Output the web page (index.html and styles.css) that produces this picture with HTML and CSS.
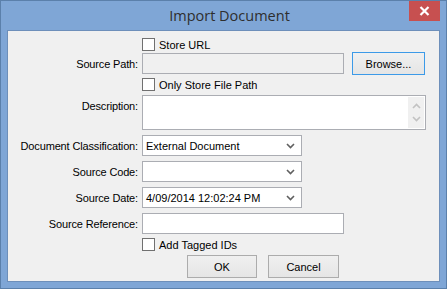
FILE: index.html
```html
<!DOCTYPE html>
<html lang="en">
<head>
    <meta charset="UTF-8">
    <title>Import Document</title>
    <link rel="stylesheet" href="styles.css">
</head>
<body>
    <div class="window">
        <!-- Title bar -->
        <div class="titlebar">
            <span class="title">Import Document</span>
            <div class="close-btn">
                <svg width="11" height="10" viewBox="0 0 11 10">
                    <path d="M1.5 1 L9.5 9 M9.5 1 L1.5 9" stroke="#fff" stroke-width="2.2"/>
                </svg>
            </div>
        </div>

        <!-- Dialog body -->
        <div class="client">
            <div class="row row-check first">
                <span class="label"></span>
                <label class="check"><span class="box"></span>Store URL</label>
            </div>

            <div class="row row-field">
                <span class="label">Source Path:</span>
                <input type="text" class="field path-field" disabled>
                <button class="btn browse">Browse...</button>
            </div>

            <div class="row row-check">
                <span class="label"></span>
                <label class="check"><span class="box"></span>Only Store File Path</label>
            </div>

            <div class="row row-desc">
                <span class="label label-top">Description:</span>
                <div class="field desc-field">
                    <div class="scrollbar">
                        <svg width="9" height="6" viewBox="0 0 9 6"><path d="M1 5 L4.5 1.5 L8 5" fill="none" stroke="#c2c2c2" stroke-width="1.6"/></svg>
                        <svg width="9" height="6" viewBox="0 0 9 6"><path d="M1 1 L4.5 4.5 L8 1" fill="none" stroke="#c2c2c2" stroke-width="1.6"/></svg>
                    </div>
                </div>
            </div>

            <div class="row row-field">
                <span class="label">Document Classification:</span>
                <div class="field select">
                    <span>External Document</span>
                    <svg class="arrow" width="9" height="6" viewBox="0 0 9 6"><path d="M1 1 L4.5 4.5 L8 1" fill="none" stroke="#606060" stroke-width="1.6"/></svg>
                </div>
            </div>

            <div class="row row-field">
                <span class="label">Source Code:</span>
                <div class="field select">
                    <span></span>
                    <svg class="arrow" width="9" height="6" viewBox="0 0 9 6"><path d="M1 1 L4.5 4.5 L8 1" fill="none" stroke="#606060" stroke-width="1.6"/></svg>
                </div>
            </div>

            <div class="row row-field">
                <span class="label">Source Date:</span>
                <div class="field select">
                    <span>4/09/2014 12:02:24 PM</span>
                    <svg class="arrow" width="9" height="6" viewBox="0 0 9 6"><path d="M1 1 L4.5 4.5 L8 1" fill="none" stroke="#606060" stroke-width="1.6"/></svg>
                </div>
            </div>

            <div class="row row-field">
                <span class="label">Source Reference:</span>
                <input type="text" class="field ref-field">
            </div>

            <div class="row row-check">
                <span class="label"></span>
                <label class="check"><span class="box"></span>Add Tagged IDs</label>
            </div>

            <div class="buttons">
                <button class="btn ok">OK</button>
                <button class="btn cancel">Cancel</button>
            </div>
        </div>
    </div>
</body>
</html>
```

FILE: styles.css
```css
* {
    box-sizing: border-box;
}

body {
    margin: 0;
    padding: 0;
    font-family: "Liberation Sans", Arial, sans-serif;
    font-size: 11px;
    color: #000;
}

/* Window frame */
.window {
    width: 447px;
    height: 289px;
    background-color: #7fa6d6;
    border: 1px solid #5b80ab;
    display: flex;
    flex-direction: column;
}

.titlebar {
    height: 29px;
    position: relative;
    display: flex;
    justify-content: center;
    align-items: center;
    padding-left: 12px;
}

.title {
    font-family: "Open Sans", sans-serif;
    font-size: 14.5px;
    color: #2e2e2e;
    margin-top: -1px;
}

.close-btn {
    position: absolute;
    top: 0;
    right: 6px;
    width: 31px;
    height: 20px;
    background-color: #c75050;
    display: flex;
    justify-content: center;
    align-items: center;
}

.client {
    flex: 1;
    margin: 0 6px 6px 6px;
    background-color: #f0f0f0;
    border: 1px solid #6d8fba;
}

/* Rows */
.row {
    display: flex;
    align-items: center;
    gap: 4px;
}

.label {
    width: 130px;
    text-align: right;
    flex-shrink: 0;
    letter-spacing: -0.15px;
}

.label-top {
    align-self: flex-start;
    padding-top: 5px;
}

.row-check {
    height: 13px;
    margin-top: 5px;
}

.row-check.first {
    margin-top: 7px;
}

.row-field {
    height: 21px;
    margin-top: 5px;
}

.row-check + .row-field {
    margin-top: 2px;
}

.row-desc {
    height: 35px;
    margin-top: 4px;
}

.row-field + .row-check {
    margin-top: 4px;
}

/* Checkbox */
.check {
    display: flex;
    align-items: center;
    gap: 4px;
}

.box {
    width: 13px;
    height: 13px;
    border: 1px solid #707070;
    background-color: #fff;
}

/* Fields */
.field {
    height: 21px;
    border: 1px solid #abadb3;
    background-color: #fff;
    font-family: inherit;
    font-size: 11px;
    margin: 0;
    padding: 0 3px;
}

.path-field {
    width: 202px;
    background-color: #f0f0f0;
}

.ref-field {
    width: 202px;
}

.desc-field {
    width: 284px;
    height: 35px;
    padding: 1px;
    display: flex;
    justify-content: flex-end;
}

.scrollbar {
    width: 16px;
    background-color: #f0f0f0;
    display: flex;
    flex-direction: column;
    align-items: center;
    justify-content: space-between;
    padding: 6px 0 6px 0;
}

.select {
    width: 160px;
    display: flex;
    align-items: center;
    justify-content: space-between;
    padding: 0 6px 0 3px;
}

.arrow {
    margin-top: 1px;
}

/* Buttons */
.btn {
    font-family: inherit;
    font-size: 11px;
    color: #000;
    border: 1px solid #acacac;
    background: linear-gradient(#f0f0f0, #e5e5e5);
    padding: 0;
    margin: 0;
}

.browse {
    width: 73px;
    height: 23px;
    margin-left: 4px;
    border-color: #3c9ae8;
}

.buttons {
    display: flex;
    gap: 11px;
    margin-top: 4px;
    padding-left: 179px;
}

.ok {
    width: 70px;
    height: 23px;
}

.cancel {
    width: 71px;
    height: 23px;
}
```
